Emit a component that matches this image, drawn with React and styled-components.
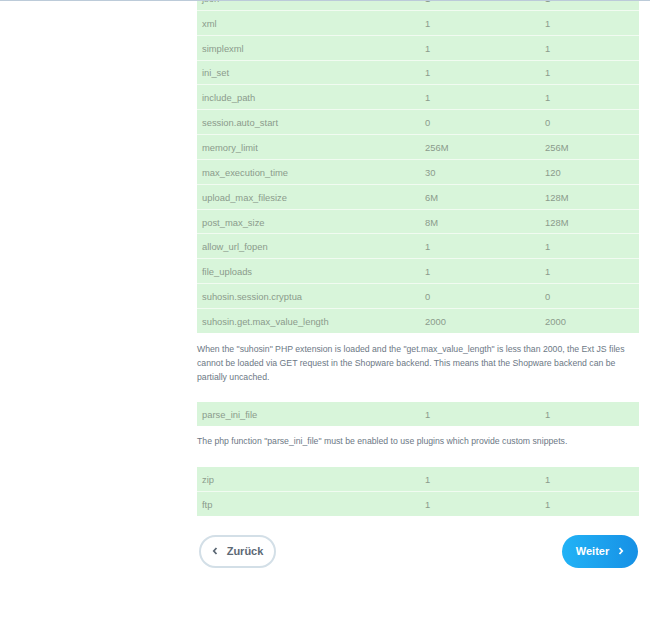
import React from "react";
import styled, { createGlobalStyle } from "styled-components";

const GlobalStyle = createGlobalStyle`
  html, body {
    margin: 0;
    padding: 0;
    background: #fff;
    font-family: "Liberation Sans", Arial, sans-serif;
  }
`;

const TopLine = styled.div`
  position: fixed;
  top: 0;
  left: 0;
  right: 0;
  height: 1px;
  background: #bccbd9;
  z-index: 2;
`;

const Page = styled.div`
  display: grid;
  grid-template-columns: 197px 442px;
  height: 634px;
  overflow: hidden;
`;

const Content = styled.div`
  grid-column: 2;
  margin-top: -14px;
  display: flex;
  flex-direction: column;
`;

const Table = styled.div`
  display: flex;
  flex-direction: column;
`;

const Row = styled.div`
  display: grid;
  grid-template-columns: 223px 120px 1fr;
  height: 24.85px;
  box-sizing: border-box;
  align-items: center;
  background: #d8f5da;
  border-bottom: 1px solid #f1fbf1;
  font-size: 9.4px;
  color: #8b9b8c;

  &:last-child {
    border-bottom: none;
    height: 24px;
  }
`;

const Cell = styled.div`
  padding: 1px 0 0 5px;
  white-space: nowrap;
`;

const Note = styled.p`
  margin: ${(p) => p.$top}px 0 ${(p) => p.$bottom}px;
  font-size: 8.7px;
  line-height: 14px;
  color: #6c7885;
`;

const Actions = styled.div`
  display: flex;
  justify-content: space-between;
  align-items: center;
  margin-top: 19px;
  padding: 0 1px 0 2px;
`;

const Button = styled.button`
  display: flex;
  align-items: center;
  justify-content: center;
  gap: 9px;
  height: 33px;
  width: ${(p) => p.$width}px;
  border-radius: 17px;
  font-family: "Liberation Sans", Arial, sans-serif;
  font-size: 11px;
  font-weight: bold;
  cursor: pointer;
  box-sizing: border-box;
  border: ${(p) => (p.$primary ? "none" : "2px solid #d3dfe7")};
  background: ${(p) =>
    p.$primary ? "linear-gradient(90deg, #22b3f6 0%, #1690e5 100%)" : "#fff"};
  color: ${(p) => (p.$primary ? "#fff" : "#5d6975")};
  padding: 0;
`;

const Chevron = ({ dir }) => (
  <svg width="6" height="8" viewBox="0 0 6 8">
    <path
      d={dir === "left" ? "M4.5 1 L1.8 4 L4.5 7" : "M1.5 1 L4.2 4 L1.5 7"}
      fill="none"
      stroke="currentColor"
      strokeWidth="1.8"
    />
  </svg>
);

const firstTable = [
  ["json", "1", "1"],
  ["xml", "1", "1"],
  ["simplexml", "1", "1"],
  ["ini_set", "1", "1"],
  ["include_path", "1", "1"],
  ["session.auto_start", "0", "0"],
  ["memory_limit", "256M", "256M"],
  ["max_execution_time", "30", "120"],
  ["upload_max_filesize", "6M", "128M"],
  ["post_max_size", "8M", "128M"],
  ["allow_url_fopen", "1", "1"],
  ["file_uploads", "1", "1"],
  ["suhosin.session.cryptua", "0", "0"],
  ["suhosin.get.max_value_length", "2000", "2000"],
];

const ConfigTable = ({ rows }) => (
  <Table>
    {rows.map((r) => (
      <Row key={r[0]}>
        <Cell>{r[0]}</Cell>
        <Cell>{r[1]}</Cell>
        <Cell>{r[2]}</Cell>
      </Row>
    ))}
  </Table>
);

const App = () => (
  <>
    <GlobalStyle />
    <TopLine />
    <Page>
      <Content>
        <ConfigTable rows={firstTable} />
        <Note $top={9} $bottom={18}>
          When the "suhosin" PHP extension is loaded and the "get.max_value_length" is less than
          2000, the Ext JS files cannot be loaded via GET request in the Shopware backend. This
          means that the Shopware backend can be partially uncached.
        </Note>
        <ConfigTable rows={[["parse_ini_file", "1", "1"]]} />
        <Note $top={8} $bottom={19}>
          The php function "parse_ini_file" must be enabled to use plugins which provide custom
          snippets.
        </Note>
        <ConfigTable
          rows={[
            ["zip", "1", "1"],
            ["ftp", "1", "1"],
          ]}
        />
        <Actions>
          <Button $width={77}>
            <Chevron dir="left" />
            Zurück
          </Button>
          <Button $primary $width={76}>
            Weiter
            <Chevron dir="right" />
          </Button>
        </Actions>
      </Content>
    </Page>
  </>
);

export default App;
